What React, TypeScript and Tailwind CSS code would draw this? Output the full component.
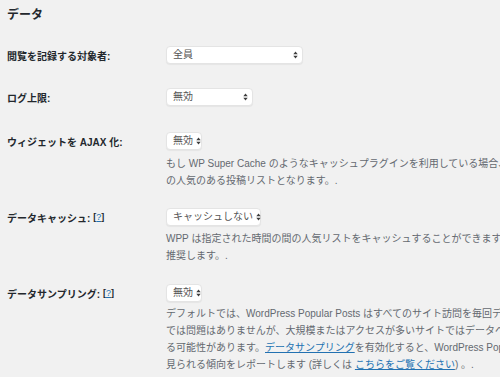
const font = "font-['Liberation_Sans','Noto_Sans_CJK_JP',sans-serif]";

function Arrows() {
  return (
    <svg width="5" height="8" viewBox="0 0 5 8" className="shrink-0">
      <path d="M0.3 3.3 L2.5 0.4 L4.7 3.3 Z" fill="#3c3c3c" />
      <path d="M0.3 4.7 L2.5 7.6 L4.7 4.7 Z" fill="#3c3c3c" />
    </svg>
  );
}

function Select({ value, width }: { value: string; width: string }) {
  return (
    <div
      className={`${width} h-[18px] flex items-center justify-between gap-[3px] pl-[6px] pr-[4px] bg-white rounded-[4px] border border-[#e4e4e4] shadow-[0_1px_1px_rgba(0,0,0,0.05)] text-[10px] leading-none text-[#555]`}
    >
      <span className="whitespace-nowrap">{value}</span>
      <Arrows />
    </div>
  );
}

function Help() {
  return (
    <span className="ml-[3px] text-[9px]">
      [<a className="font-normal text-[#2271b1] underline">?</a>]
    </span>
  );
}

function Row({
  label,
  select,
  lines,
  top,
  descTop,
}: {
  label: React.ReactNode;
  select: React.ReactNode;
  lines?: React.ReactNode[];
  top: string;
  descTop?: string;
}) {
  return (
    <div className={`flex ${top}`}>
      <div className="w-[159px] shrink-0 h-[18px] flex items-center pt-[2px] text-[10px] font-bold text-[#23282d] whitespace-nowrap">
        {label}
      </div>
      <div className="flex flex-col">
        {select}
        {lines && (
          <div className={`${descTop} text-[10px] leading-[17px] text-[#646970] whitespace-nowrap`}>
            {lines.map((l, i) => (
              <div key={i}>{l}</div>
            ))}
          </div>
        )}
      </div>
    </div>
  );
}

export default function App() {
  const link = "text-[#2271b1] underline";
  return (
    <div className={`${font} w-[500px] h-[377px] overflow-hidden bg-[#f1f1f1] pl-[7px] pt-[7px]`}>
      <h2 className="text-[12px] leading-[16px] font-semibold text-[#23282d]">データ</h2>

      <Row
        top="mt-[23px]"
        label="閲覧を記録する対象者:"
        select={<Select value="全員" width="w-[137px]" />}
      />
      <Row
        top="mt-[24px]"
        label="ログ上限:"
        select={<Select value="無効" width="w-[87px]" />}
      />
      <Row
        top="mt-[26px]"
        label="ウィジェットを AJAX 化:"
        select={<Select value="無効" width="w-[36px]" />}
        descTop="mt-[5px]"
        lines={[
          "もし WP Super Cache のようなキャッシュプラグインを利用している場合、これを有効にすると常に最新",
          "の人気のある投稿リストとなります。.",
        ]}
      />
      <Row
        top="mt-[19px]"
        label={
          <>
            データキャッシュ:
            <Help />
          </>
        }
        select={<Select value="キャッシュしない" width="w-[95px]" />}
        descTop="mt-[4px]"
        lines={[
          "WPP は指定された時間の間の人気リストをキャッシュすることができます。有効にすることを",
          "推奨します。.",
        ]}
      />
      <Row
        top="mt-[20px]"
        label={
          <>
            データサンプリング:
            <Help />
          </>
        }
        select={<Select value="無効" width="w-[36px]" />}
        descTop="mt-[3px]"
        lines={[
          "デフォルトでは、WordPress Popular Posts はすべてのサイト訪問を毎回データベースに保存します。小さなサイト",
          "では問題はありませんが、大規模またはアクセスが多いサイトではデータベースへの負荷が高くな",
          <>
            る可能性があります。<a className={link}>データサンプリング</a>を有効化すると、WordPress Popular Posts は
          </>,
          <>
            見られる傾向をレポートします (詳しくは <a className={link}>こちらをご覧ください</a>) 。.
          </>,
        ]}
      />
    </div>
  );
}
